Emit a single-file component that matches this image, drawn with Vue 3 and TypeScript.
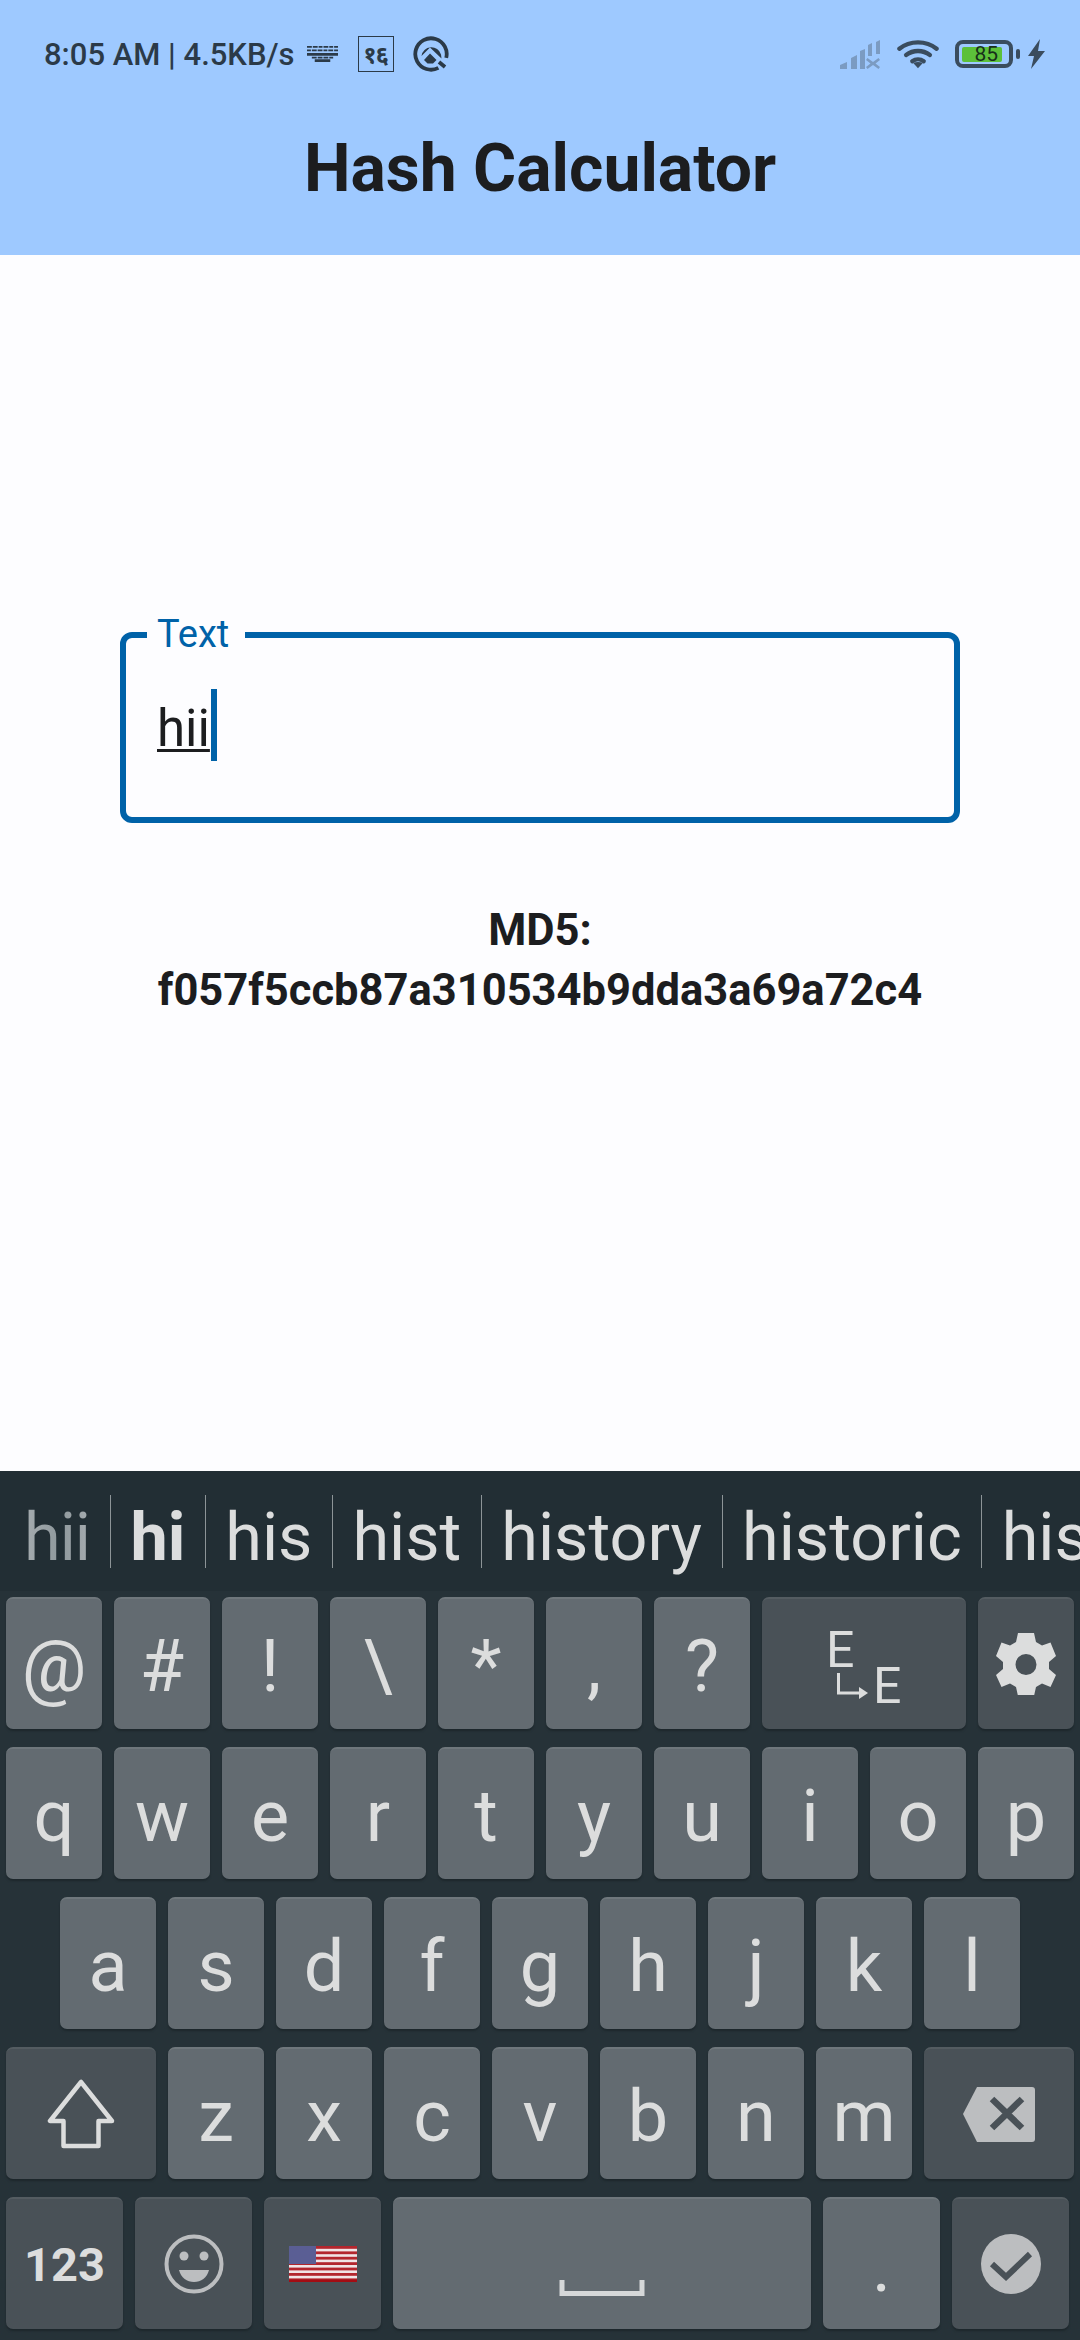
<script setup lang="ts">
type Key = { label?: string; icon?: string; cls?: string }

const suggestions = ['hi', 'his', 'hist', 'history', 'historic', 'historical']

const toKeys = (s: string): Key[] => s.split('').map((label) => ({ label }))

const rows: { name: string; keys: Key[] }[] = [
  {
    name: 'r1',
    keys: [...toKeys('@#!\\*,?'), { icon: 'lang', cls: 'mod wide' }, { icon: 'gear', cls: 'mod' }],
  },
  { name: 'r2', keys: toKeys('qwertyuiop') },
  { name: 'r3', keys: toKeys('asdfghjkl') },
  {
    name: 'r4',
    keys: [{ icon: 'shift', cls: 'mod side' }, ...toKeys('zxcvbnm'), { icon: 'del', cls: 'mod side' }],
  },
  {
    name: 'r5',
    keys: [
      { label: '123', cls: 'mod num' },
      { icon: 'emoji', cls: 'mod' },
      { icon: 'flag', cls: 'mod' },
      { icon: 'space', cls: 'space' },
      { label: '.' },
      { icon: 'check', cls: 'mod' },
    ],
  },
]

const stripes = [0, 1, 2, 3, 4, 5, 6]
</script>

<template>
  <div class="screen">
    <header class="appbar">
      <div class="status">
        <span class="clock">8:05 AM | 4.5KB/s</span>
        <!-- keyboard -->
        <svg class="st-kbd" width="31" height="16" viewBox="0 0 32 18" preserveAspectRatio="none" fill="#2b3a48">
          <path d="M0 0h5v2H0zM6 0h5v2H6zM12 0h4v2h-4zM17 0h5v2h-5zM23 0h4v2h-4zM28 0h4v2h-4zM0 4h4v2H0zM5 4h5v2H5zM11 4h5v2h-5zM17 4h4v2h-4zM22 4h5v2h-5zM28 4h4v2h-4zM0 8h32v3H0zM5 12h5v2H5zM11 12h5v2h-5zM17 12h5v2h-5zM23 12h4v2h-4zM8 15h16v3H8z" />
        </svg>
        <span class="st-box">
          <span class="st-nepali">१६</span>
        </span>
        <!-- Q style ring -->
        <svg class="st-ring" width="36" height="38" viewBox="0 0 36 38">
          <circle cx="18" cy="19" r="15.700" fill="none" stroke="#2b3a48" stroke-width="3.800" stroke-dasharray="85 13" transform="rotate(62 18 19)" />
          <path d="M8.500 21A10 10 0 0 1 28 19.500L28.500 23.500 17 12.500z" fill="#2b3a48" />
          <path d="M11 25l6-6.500 6.500 6.500-3.500 3.500h-5.500z" fill="#2b3a48" />
          <path d="M26 27l6 5" stroke="#2b3a48" stroke-width="3.800" />
        </svg>
        <span class="st-grow"></span>
        <!-- no signal -->
        <svg class="st-signal" width="42" height="30" viewBox="0 0 42 30" fill="#7b9bc2">
          <path d="M1 30v-4l7-3v7zM12 30V19l6-3v14zM21 30V12l5-2v20zM29 17V6l4-2v13zM37 15V3l4-2v14z" />
          <path d="M28.500 19l5.500 4 5.500-4 1.500 2-4.500 3.500 4.500 3.500-1.500 2-5.500-4-5.500 4-1.500-2 4.500-3.500-4.500-3.500z" />
        </svg>
        <!-- wifi -->
        <svg class="st-wifi" width="42" height="30" viewBox="0 0 44 30" fill="none" stroke="#3a4c5e" stroke-width="4.500" stroke-linecap="round">
          <path d="M2.500 9.500C13.500 0.500 30.500 0.500 41.500 9.500" />
          <path d="M9.500 16C17 10.500 27 10.500 34.500 16" />
          <path d="M16 22.500C19.500 20 24.500 20 28 22.500" />
          <path d="M22 30l-5-5.500c3-1.600 7-1.600 10 0z" fill="#3a4c5e" stroke="none" />
        </svg>
        <!-- battery -->
        <span class="st-batt">
          <span class="st-batt-fill"><span class="st-batt-num">85</span></span>
        </span>
        <span class="st-nub"></span>
        <svg class="st-bolt" width="18" height="30" viewBox="0 0 18 30" fill="#3a4c5e">
          <path d="M13 0L1 17h6L4 30 18 12h-7z" />
        </svg>
      </div>
      <h1 class="title">Hash Calculator</h1>
    </header>

    <main class="content">
      <div class="field">
        <span class="field-label">Text</span>
        <span class="field-value"><span class="composing">hii</span><span class="caret"></span></span>
      </div>
      <p class="result">MD5:<br />f057f5ccb87a310534b9dda3a69a72c4</p>
    </main>

    <section class="keyboard">
      <div class="suggest">
        <span class="word typed">hii</span>
        <template v-for="(w, i) in suggestions" :key="w">
          <span class="div"></span>
          <span class="word" :class="{ best: i === 0 }">{{ w }}</span>
        </template>
      </div>

      <div v-for="row in rows" :key="row.name" class="row" :class="row.name">
        <div v-for="(k, i) in row.keys" :key="i" class="key" :class="k.cls">
          <template v-if="k.label">{{ k.label }}</template>

          <span v-else-if="k.icon === 'lang'" class="lang">
            <span class="lang-a">E</span>
            <svg class="lang-arrow" width="32" height="26" viewBox="0 0 32 26" fill="none" stroke="#dcdddd" stroke-width="3">
              <path d="M1.500 0v20H24" />
              <path d="M22 14l9 6-9 6z" fill="#dcdddd" stroke="none" />
            </svg>
            <span class="lang-b">E</span>
          </span>

          <svg v-else-if="k.icon === 'gear'" class="ic" width="60" height="62" viewBox="0 0 60 62">
            <path fill-rule="evenodd" fill="#dcdddd" d="M22 0h16l2 9 6 3.500 8.500-3L60 23l-7 6v7l7 6-5.500 12-8.500-3.500-6 3.500-2 9H22l-2-9-6-3.500-8.500 3.500L0 42l7-6v-7l-7-6 5.500-13.500 8.500 3L20 9zM30 21a10.500 10.500 0 1 0 0 21a10.500 10.500 0 1 0 0-21z" />
          </svg>

          <svg v-else-if="k.icon === 'shift'" class="ic" width="68" height="70" viewBox="0 0 68 70" fill="none" stroke="#dcdddd" stroke-width="4.500" stroke-linejoin="round">
            <path d="M34 3L3 42h13.500v25h35V42H65z" />
          </svg>

          <svg v-else-if="k.icon === 'del'" class="ic" width="72" height="56" viewBox="0 0 72 56">
            <path fill="#bcbec0" d="M14 1h55a3 3 0 0 1 3 3v49a3 3 0 0 1-3 3H14L0 28z" />
            <path stroke="#495157" stroke-width="6.500" d="M29 13l30 29M59 13L29 42" />
          </svg>

          <svg v-else-if="k.icon === 'emoji'" class="ic" width="60" height="60" viewBox="0 0 60 60">
            <circle cx="30" cy="30" r="27.500" fill="none" stroke="#bcbec0" stroke-width="4" />
            <circle cx="20" cy="22" r="4.500" fill="#bcbec0" />
            <circle cx="40" cy="22" r="4.500" fill="#bcbec0" />
            <path d="M15 36h30c-2 8-8 12-15 12s-13-4-15-12z" fill="#bcbec0" />
          </svg>

          <svg v-else-if="k.icon === 'flag'" class="ic" width="68" height="36" viewBox="0 0 68 36">
            <rect width="68" height="36" fill="#f0e4e6" />
            <rect v-for="s in stripes" :key="s" y="0" :transform="`translate(0 ${s * 5.400})`" width="68" height="2.800" fill="#b3262e" />
            <rect y="33.500" width="68" height="2.500" fill="#a30d14" />
            <rect width="27" height="18" fill="#5a5e94" />
          </svg>

          <svg v-else-if="k.icon === 'space'" class="ic ic-space" width="86" height="16" viewBox="0 0 86 16" fill="none" stroke="#d6d8d9" stroke-width="5">
            <path d="M3 0v13.500h80V0" />
          </svg>

          <svg v-else-if="k.icon === 'check'" class="ic" width="60" height="60" viewBox="0 0 60 60">
            <circle cx="30" cy="30" r="30" fill="#bcbec0" />
            <path d="M11 30l14 13 24-23" fill="none" stroke="#495157" stroke-width="6" />
          </svg>
        </div>
      </div>
    </section>
  </div>
</template>

<style scoped>
.screen {
  position: relative;
  width: 1080px;
  height: 2340px;
  display: flex;
  flex-direction: column;
  overflow: hidden;
  background: #fdfdff;
  font-family: Roboto, "Noto Sans", sans-serif;
}

/* app bar + status */
.appbar {
  height: 255px;
  flex: none;
  background: #9ec9ff;
}
.status {
  display: flex;
  align-items: center;
  height: 54px;
  margin-top: 27px;
  padding: 0 0 0 44px;
  color: #2b3a48;
}
.clock {
  font-size: 31px;
  font-weight: 500;
  white-space: nowrap;
}
.st-kbd {
  margin-left: 12px;
}
.st-box {
  width: 36px;
  height: 36px;
  margin-left: 20px;
  border: 1.500px solid #2b3a48;
  box-sizing: border-box;
  display: flex;
  align-items: center;
  justify-content: center;
  overflow: hidden;
}
.st-nepali {
  font-family: "Noto Sans", "DejaVu Sans", sans-serif;
  font-size: 24px;
  line-height: 30px;
  font-weight: 700;
  letter-spacing: -1px;
  color: #2b3a48;
}
.st-ring {
  margin-left: 19px;
}
.st-grow {
  flex: 1;
}
.st-signal {
  margin-right: 16px;
}
.st-wifi {
  margin-right: 16px;
}
.st-batt {
  width: 58px;
  height: 28px;
  box-sizing: border-box;
  border: 4px solid #3a4c5e;
  border-radius: 8px;
  padding: 3px;
}
.st-batt-fill {
  display: block;
  width: 40px;
  height: 15px;
  background: #5cc03a;
  border-radius: 2px;
  position: relative;
}
.st-batt-num {
  position: absolute;
  right: 4px;
  top: -3px;
  font-size: 21px;
  line-height: 21px;
  color: #17301a;
}
.st-nub {
  width: 4px;
  height: 10px;
  margin-left: 3px;
  background: #3a4c5e;
  border-radius: 2px;
}
.st-bolt {
  margin: 0 35px 0 7px;
}
.title {
  margin: 53px 0 0;
  text-align: center;
  font-size: 66px;
  line-height: 70px;
  font-weight: 700;
  color: #1c1d1f;
}

/* body */
.content {
  flex: 1;
  padding: 377px 120px 0 120px;
  text-align: center;
}
.field {
  position: relative;
  height: 191px;
  box-sizing: border-box;
  border: 6px solid #0062a8;
  border-radius: 12px;
  text-align: left;
}
.field-label {
  position: absolute;
  left: 21px;
  top: -23px;
  padding: 0 16px 0 10px;
  background: #fdfdff;
  font-size: 38px;
  line-height: 38px;
  color: #0062a8;
}
.field-value {
  position: absolute;
  left: 31px;
  top: 51px;
  display: flex;
  align-items: flex-start;
  font-size: 51px;
  line-height: 80px;
  color: #1c1d1f;
}
.composing {
  text-decoration: underline;
  text-decoration-thickness: 3px;
  text-underline-offset: 3px;
}
.caret {
  width: 6px;
  height: 72px;
  margin-left: 1px;
  background: #0062a8;
}
.result {
  margin: 78px -60px 0;
  font-size: 43.500px;
  line-height: 60px;
  font-weight: 700;
  color: #1c1d1f;
}

/* keyboard */
.keyboard {
  flex: none;
  height: 869px;
  background: #263238;
  color: #dcdddd;
}
.suggest {
  display: flex;
  align-items: center;
  height: 120px;
  background: #222e34;
  overflow: hidden;
  white-space: nowrap;
  font-size: 66.500px;
  line-height: 108px;
}
.word {
  flex: none;
  margin-top: 12px;
  padding: 0 19.500px;
}
.word.typed {
  padding: 0 20px 0 24px;
  letter-spacing: -1px;
  background: linear-gradient(90deg, #b4b9bc, #8f989c 55%, #b4b9bc);
  -webkit-background-clip: text;
  background-clip: text;
  color: transparent;
}
.word.best {
  font-weight: 700;
}
.div {
  flex: none;
  width: 1px;
  height: 73px;
  background: #8d9497;
}
.row {
  display: flex;
  justify-content: center;
  gap: 12px;
  margin-top: 18px;
  padding: 0 6px;
}
.r1 {
  margin-top: 6px;
}
.key {
  flex: none;
  width: 96px;
  height: 132px;
  box-sizing: border-box;
  position: relative;
  border-radius: 7px;
  background: #636b71;
  border-top: 2px solid #6f777c;
  box-shadow: 0 2px 2px #1d272c;
  font-size: 72px;
  line-height: 135px;
  text-align: center;
  display: flex;
  align-items: flex-start;
  justify-content: center;
}
.key.mod {
  background: #495157;
  border-top-color: #545c61;
}
.key.wide {
  width: 204px;
}
.key.side {
  width: 150px;
}
.r5 {
  justify-content: flex-start;
}
.r5 .key {
  width: 117px;
}
.r5 .key.space {
  width: 418px;
}
.key.num {
  font-size: 47px;
  font-weight: 700;
  line-height: 132px;
}
.ic {
  align-self: center;
}
.ic-space {
  align-self: flex-end;
  margin: 0 0 33px;
}
.lang {
  position: relative;
  display: block;
  width: 72px;
  height: 74px;
  margin-top: 33px;
  font-size: 50px;
  line-height: 36px;
}
.lang-a {
  position: absolute;
  left: -2px;
  top: 0;
}
.lang-b {
  position: absolute;
  left: 45px;
  top: 36px;
}
.lang-arrow {
  position: absolute;
  left: 9px;
  top: 41px;
}
</style>

<style>
html,
body {
  margin: 0;
  background: #fdfdff;
}
</style>
